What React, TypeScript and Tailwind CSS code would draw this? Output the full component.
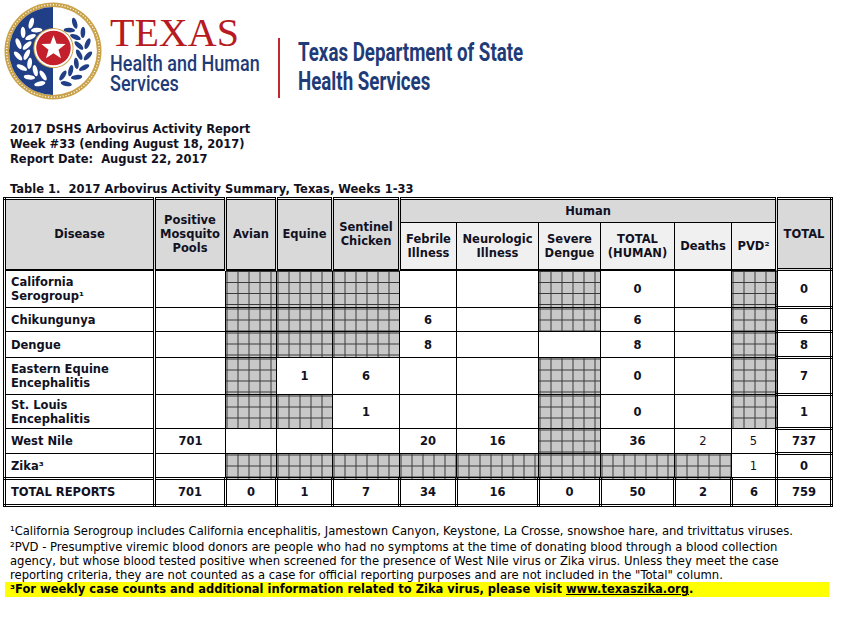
import React from 'react';

type Cell = { v?: string; h?: boolean; n?: boolean };

const HATCH =
  'bg-[#c8c8c8] bg-[linear-gradient(to_right,#3a3a3a_1px,transparent_1px),linear-gradient(to_bottom,#3a3a3a_1px,transparent_1px)] bg-size-[11px_11px]';

const X: Cell = { h: true };
const E: Cell = {};

const rows: { name: React.ReactNode; hgt: string; cells: Cell[]; total: string }[] = [
  {
    name: (
      <>
        California
        <br />
        Serogroup¹
      </>
    ),
    hgt: 'h-[38px]',
    cells: [E, X, X, X, E, E, X, { v: '0' }, E, X],
    total: '0',
  },
  { name: 'Chikungunya', hgt: 'h-[24px]', cells: [E, X, X, X, { v: '6' }, E, X, { v: '6' }, E, X], total: '6' },
  { name: 'Dengue', hgt: 'h-[26px]', cells: [E, X, X, X, { v: '8' }, E, E, { v: '8' }, E, X], total: '8' },
  {
    name: (
      <>
        Eastern Equine
        <br />
        Encephalitis
      </>
    ),
    hgt: 'h-[37px]',
    cells: [E, X, { v: '1' }, { v: '6' }, E, E, X, { v: '0' }, E, X],
    total: '7',
  },
  {
    name: (
      <>
        St. Louis
        <br />
        Encephalitis
      </>
    ),
    hgt: 'h-[34px]',
    cells: [E, X, X, { v: '1' }, E, E, X, { v: '0' }, E, X],
    total: '1',
  },
  {
    name: 'West Nile',
    hgt: 'h-[25px]',
    cells: [{ v: '701' }, E, E, E, { v: '20' }, { v: '16' }, X, { v: '36' }, { v: '2', n: true }, { v: '5', n: true }],
    total: '737',
  },
  { name: 'Zika³', hgt: 'h-[25px]', cells: [E, X, X, X, X, X, X, X, X, { v: '1', n: true }], total: '0' },
];

const totals = ['701', '0', '1', '7', '34', '16', '0', '50', '2', '6'];

const widths = [150, 71, 51, 56, 67, 57, 82, 62, 74, 57, 45, 55];

function Seal() {
  const leaves: React.ReactNode[] = [];
  const angles = [112, 132, 152, 172, 192, 212, 232];
  angles.forEach((a, i) => {
    [36, 27].forEach((r, j) => {
      const rad = (a * Math.PI) / 180;
      const cx = 50 + r * Math.cos(rad);
      const cy = 50 + r * Math.sin(rad);
      const rot = a + 90 + (j === 0 ? -35 : 35);
      const rad2 = ((180 - a) * Math.PI) / 180;
      const cx2 = 50 + r * Math.cos(rad2);
      const cy2 = 50 + r * Math.sin(rad2);
      const rot2 = 180 - a + 90 - (j === 0 ? -35 : 35);
      leaves.push(
        <ellipse key={`l${i}${j}`} cx={cx} cy={cy} rx="5.8" ry="2.4" fill="#fff" transform={`rotate(${rot} ${cx} ${cy})`} />,
        <ellipse key={`r${i}${j}`} cx={cx2} cy={cy2} rx="5.8" ry="2.4" fill="#203f86" transform={`rotate(${rot2} ${cx2} ${cy2})`} />,
      );
    });
  });
  const star: string[] = [];
  for (let k = 0; k < 10; k++) {
    const r = k % 2 === 0 ? 13 : 5.4;
    const a = (-90 + k * 36) * (Math.PI / 180);
    star.push(`${(50.5 + r * Math.cos(a)).toFixed(2)},${(47 + r * Math.sin(a)).toFixed(2)}`);
  }
  return (
    <svg width="98" height="98" viewBox="0 0 100 100" className="ml-[4px] mt-[2px] shrink-0">
      <circle cx="50" cy="50" r="49.5" fill="#c9a24a" />
      <circle cx="50" cy="50" r="47.2" fill="none" stroke="#fff" strokeWidth="1.3" strokeDasharray="1.1 1.9" />
      <circle cx="50" cy="50" r="44.8" fill="#fff" />
      <path d="M50 5.2 A44.8 44.8 0 0 0 50 94.8 Z" fill="#203f86" />
      {leaves}
      <circle cx="50.5" cy="47" r="20.5" fill="#c9a24a" />
      <circle cx="50.5" cy="47" r="19.5" fill="#fff" />
      <circle cx="50.5" cy="47" r="17.6" fill="#c4202b" />
      <polygon points={star.join(' ')} fill="#fff" />
    </svg>
  );
}

function Header() {
  return (
    <div className="flex h-[122px] items-start">
      <Seal />
      <div className="ml-[8px] mt-[13px] w-[168px] whitespace-nowrap">
        <span className="block h-[40px] font-['Liberation_Serif',serif] text-[40px] leading-[40px] text-[#b71a21]">TEXAS</span>
        <span className="block origin-left scale-x-[0.8] font-['Roboto',sans-serif] text-[22.5px] font-medium leading-[20px] text-[#1f3b78]">
          Health and Human
          <br />
          Services
        </span>
      </div>
      <div className="mt-[38px] h-[60px] w-[2px] bg-[#c3272e]" />
      <div className="ml-[18px] mt-[38px] origin-left scale-x-[0.72] whitespace-nowrap font-['Roboto',sans-serif] text-[26px] font-bold leading-[29px] text-[#1f3b78]">
        Texas Department of State
        <br />
        Health Services
      </div>
    </div>
  );
}

export default function App() {
  const td = 'border border-double border-black p-0 text-center align-middle';
  return (
    <div className="h-[628px] w-[847px] overflow-hidden bg-white font-['DejaVu_Sans',Verdana,sans-serif] text-[#111122]">
      <Header />
      <div className="pl-[10px] text-[11.5px] font-bold leading-[15px]">
        <div>2017 DSHS Arbovirus Activity Report</div>
        <div>Week #33 (ending August 18, 2017)</div>
        <div className="whitespace-pre">Report Date:  August 22, 2017</div>
        <div className="mt-[15px] whitespace-pre">Table 1.  2017 Arbovirus Activity Summary, Texas, Weeks 1-33</div>
      </div>
      <table className="ml-[3px] w-[827px] table-fixed border-collapse border-[3px] border-double border-black text-[11.5px] font-bold leading-[14px]">
        <colgroup>
          {widths.map((w, i) => (
            <col key={i} style={{ width: w }} />
          ))}
        </colgroup>
        <thead>
          <tr className="h-[24px] bg-[#d9d9d9]">
            <th rowSpan={2} className={`${td} border-b-2 border-r-[3px]`}>
              Disease
            </th>
            <th rowSpan={2} className={`${td} border-b-2 border-r-[3px]`}>
              Positive
              <br />
              Mosquito
              <br />
              Pools
            </th>
            <th rowSpan={2} className={`${td} border-b-2 border-r-[3px]`}>
              Avian
            </th>
            <th rowSpan={2} className={`${td} border-b-2 border-r-[3px]`}>
              Equine
            </th>
            <th rowSpan={2} className={`${td} border-b-2 border-r-[3px]`}>
              Sentinel
              <br />
              Chicken
            </th>
            <th colSpan={6} className={`${td}`}>
              Human
            </th>
            <th rowSpan={2} className={`${td} border-b-2 border-l-[3px]`}>
              TOTAL
            </th>
          </tr>
          <tr className="h-[47px] bg-[#f0f0f0]">
            <th className={`${td} border-b-2`}>
              Febrile
              <br />
              Illness
            </th>
            <th className={`${td} border-b-2`}>
              Neurologic
              <br />
              Illness
            </th>
            <th className={`${td} border-b-2`}>
              Severe
              <br />
              Dengue
            </th>
            <th className={`${td} border-b-2`}>
              TOTAL
              <br />
              (HUMAN)
            </th>
            <th className={`${td} border-b-2`}>Deaths</th>
            <th className={`${td} border-b-2`}>PVD²</th>
          </tr>
        </thead>
        <tbody>
          {rows.map((r, i) => (
            <tr key={i} className={r.hgt}>
              <td className={`${td} border-r-[3px] pl-[5px] text-left`}>{r.name}</td>
              {r.cells.map((c, j) => (
                <td key={j} className={`${td} ${c.h ? HATCH : 'bg-white'} ${c.n ? 'font-normal' : ''}`}>
                  {c.v}
                </td>
              ))}
              <td className={`${td} border-[3px]`}>{r.total}</td>
            </tr>
          ))}
          <tr className="h-[27px]">
            <td className={`${td} border-[3px] pl-[5px] text-left`}>TOTAL REPORTS</td>
            {totals.map((t, j) => (
              <td key={j} className={`${td} border-[3px]`}>
                {t}
              </td>
            ))}
            <td className={`${td} border-[3px]`}>759</td>
          </tr>
        </tbody>
      </table>
      <div className="mt-[17px] text-[11.6px] leading-[14px] text-black">
        <div className="whitespace-nowrap pl-[10px]">
          ¹California Serogroup includes California encephalitis, Jamestown Canyon, Keystone, La Crosse, snowshoe hare, and
          trivittatus viruses.
        </div>
        <div className="mt-[2px] whitespace-nowrap pl-[10px]">
          ²PVD - Presumptive viremic blood donors are people who had no symptoms at the time of donating blood through a blood
          collection
          <br />
          agency, but whose blood tested positive when screened for the presence of West Nile virus or Zika virus. Unless they
          meet the case
          <br />
          reporting criteria, they are not counted as a case for official reporting purposes and are not included in the
          "Total" column.
        </div>
        <div className="ml-[5px] h-[15px] w-[824px] whitespace-nowrap bg-[#ffff00] pl-[5px] text-[11.5px] font-bold leading-[15px]">
          ³For weekly case counts and additional information related to Zika virus, please visit{' '}
          <span className="underline">www.texaszika.org</span>.
        </div>
      </div>
    </div>
  );
}
